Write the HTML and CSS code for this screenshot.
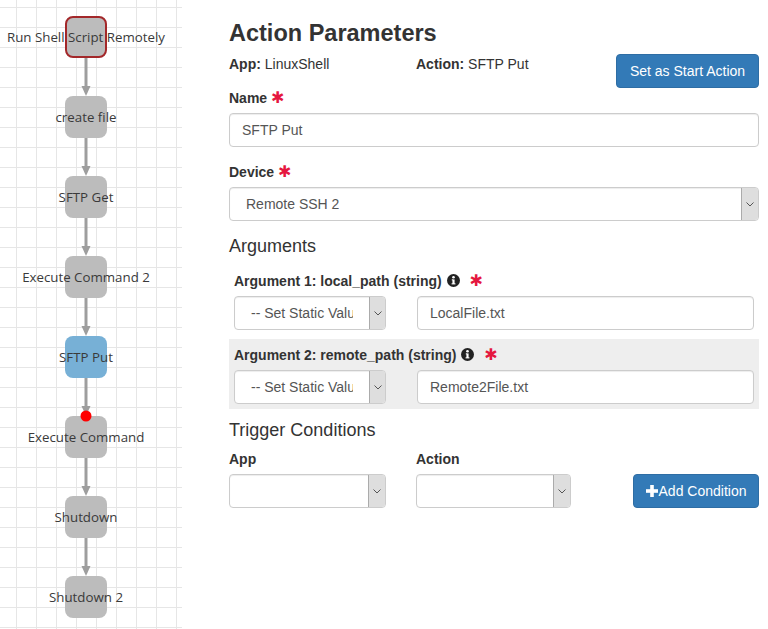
FILE: index.html
```html
<!DOCTYPE html>
<html>
<head>
<meta charset="utf-8">
<link rel="stylesheet" href="styles.css">
</head>
<body>
<div class="page">
  <div class="canvas">
    <svg class="graph" width="182" height="629" viewBox="0 0 182 629">
      <defs>
        <g id="edge">
          <line x1="86" y1="0" x2="86" y2="30" stroke="#9e9e9e" stroke-width="3"/>
          <polygon points="81.5,28 90.5,28 86,38" fill="#9e9e9e"/>
        </g>
      </defs>
      <use href="#edge" x="0" y="58"/>
      <use href="#edge" x="0" y="138"/>
      <use href="#edge" x="0" y="218"/>
      <use href="#edge" x="0" y="298"/>
      <use href="#edge" x="0" y="378"/>
      <use href="#edge" x="0" y="458"/>
      <use href="#edge" x="0" y="538"/>

      <rect class="node start" x="66" y="17" width="40" height="40" rx="7"/>
      <rect class="node" x="65" y="96" width="42" height="42" rx="8"/>
      <rect class="node" x="65" y="176" width="42" height="42" rx="8"/>
      <rect class="node" x="65" y="256" width="42" height="42" rx="8"/>
      <rect class="node selected" x="65" y="336" width="42" height="42" rx="8"/>
      <rect class="node" x="65" y="416" width="42" height="42" rx="8"/>
      <rect class="node" x="65" y="496" width="42" height="42" rx="8"/>
      <rect class="node" x="65" y="576" width="42" height="42" rx="8"/>

      <circle cx="86" cy="416" r="5.5" fill="#ff0000"/>

      <text class="lbl" x="86" y="42">Run Shell Script Remotely</text>
      <text class="lbl" x="86" y="122">create file</text>
      <text class="lbl" x="86" y="202">SFTP Get</text>
      <text class="lbl" x="86" y="282">Execute Command 2</text>
      <text class="lbl" x="86" y="362">SFTP Put</text>
      <text class="lbl" x="86" y="442">Execute Command</text>
      <text class="lbl" x="86" y="522">Shutdown</text>
      <text class="lbl" x="86" y="602">Shutdown 2</text>
    </svg>
  </div>

  <div class="panel">
    <h3 class="title">Action Parameters</h3>
    <div class="meta-row">
      <div class="meta meta-app"><b>App:</b> LinuxShell</div>
      <div class="meta meta-action"><b>Action:</b> SFTP Put</div>
      <button class="btn btn-primary btn-start">Set as Start Action</button>
    </div>

    <div class="form-group">
      <label class="lbl-bold">Name <span class="req">✱</span></label>
      <input class="form-control" type="text" value="SFTP Put">
    </div>

    <div class="form-group">
      <label class="lbl-bold">Device <span class="req">✱</span></label>
      <div class="select">
        <span class="select-text">Remote SSH 2</span>
        <span class="select-arrow"><svg width="8" height="5" viewBox="0 0 8 5"><polyline points="0.5,0.5 4,4 7.5,0.5" fill="none" stroke="#555" stroke-width="1"/></svg></span>
      </div>
    </div>

    <h4 class="section">Arguments</h4>

    <div class="arg">
      <label class="lbl-bold">Argument 1: local_path (string) <svg class="info" width="13" height="13" viewBox="0 0 12 12"><circle cx="6" cy="6" r="6" fill="#222"/><circle cx="6" cy="3" r="1.2" fill="#fff"/><rect x="5" y="5" width="2" height="4.2" fill="#fff"/><rect x="4.2" y="8.6" width="3.6" height="1" fill="#fff"/><rect x="4.4" y="5" width="1.2" height="0.9" fill="#fff"/></svg> <span class="req req-gap">✱</span></label>
      <div class="arg-row">
        <div class="select select-sm">
          <span class="select-text">-- Set Static Value --</span>
          <span class="select-arrow"><svg width="8" height="5" viewBox="0 0 8 5"><polyline points="0.5,0.5 4,4 7.5,0.5" fill="none" stroke="#555" stroke-width="1"/></svg></span>
        </div>
        <input class="form-control" type="text" value="LocalFile.txt">
      </div>
    </div>

    <div class="arg arg-alt">
      <label class="lbl-bold">Argument 2: remote_path (string) <svg class="info" width="13" height="13" viewBox="0 0 12 12"><circle cx="6" cy="6" r="6" fill="#222"/><circle cx="6" cy="3" r="1.2" fill="#fff"/><rect x="5" y="5" width="2" height="4.2" fill="#fff"/><rect x="4.2" y="8.6" width="3.6" height="1" fill="#fff"/><rect x="4.4" y="5" width="1.2" height="0.9" fill="#fff"/></svg> <span class="req req-gap">✱</span></label>
      <div class="arg-row">
        <div class="select select-sm">
          <span class="select-text">-- Set Static Value --</span>
          <span class="select-arrow"><svg width="8" height="5" viewBox="0 0 8 5"><polyline points="0.5,0.5 4,4 7.5,0.5" fill="none" stroke="#555" stroke-width="1"/></svg></span>
        </div>
        <input class="form-control" type="text" value="Remote2File.txt">
      </div>
    </div>

    <h4 class="section section-trigger">Trigger Conditions</h4>
    <div class="trigger-row">
      <div class="trig-col trig-app">
        <label class="lbl-bold">App</label>
        <div class="select">
          <span class="select-text"></span>
          <span class="select-arrow"><svg width="8" height="5" viewBox="0 0 8 5"><polyline points="0.5,0.5 4,4 7.5,0.5" fill="none" stroke="#555" stroke-width="1"/></svg></span>
        </div>
      </div>
      <div class="trig-col trig-action">
        <label class="lbl-bold">Action</label>
        <div class="select">
          <span class="select-text"></span>
          <span class="select-arrow"><svg width="8" height="5" viewBox="0 0 8 5"><polyline points="0.5,0.5 4,4 7.5,0.5" fill="none" stroke="#555" stroke-width="1"/></svg></span>
        </div>
      </div>
      <button class="btn btn-primary btn-add"><svg class="plus" width="12" height="12" viewBox="0 0 12 12"><rect x="4.2" y="0" width="3.6" height="12" fill="#fff"/><rect x="0" y="4.2" width="12" height="3.6" fill="#fff"/></svg>Add Condition</button>
    </div>
  </div>
</div>
</body>
</html>
```
FILE: styles.css
```css
* { box-sizing: border-box; }
html, body { margin: 0; padding: 0; background: #fff; }
body {
  font-family: "Liberation Sans", Arial, sans-serif;
  font-size: 14px;
  line-height: 20px;
  color: #333;
}
.page {
  display: flex;
  align-items: flex-start;
  width: 768px;
  height: 629px;
  overflow: hidden;
}
.canvas {
  width: 182px;
  height: 629px;
  flex: 0 0 182px;
  background-color: #fff;
  background-image:
    linear-gradient(to right, #e6e6e6 1px, transparent 1px),
    linear-gradient(to bottom, #e6e6e6 1px, transparent 1px);
  background-size: 20px 20px;
  background-position: 16px 7px;
}
.graph { display: block; }
.node { fill: #bcbcbc; }
.node.start { stroke: #a3282a; stroke-width: 2; }
.node.selected { fill: #77b0d6; }
.lbl {
  font-family: "Open Sans", "Noto Sans", sans-serif;
  font-size: 13.3px;
  fill: #3a3a3a;
  text-anchor: middle;
}

.panel {
  margin-left: 47px;
  width: 530px;
  flex: 0 0 530px;
}
.title {
  margin: 20px 0 8px;
  font-size: 23.5px;
  line-height: 26px;
  font-weight: bold;
  color: #333;
}
.meta-row {
  display: flex;
  align-items: flex-start;
  height: 34px;
}
.meta { line-height: 20px; }
.meta-app { width: 187px; }
.meta-action { flex: 1; }
.btn {
  font-family: "Liberation Sans", Arial, sans-serif;
  font-size: 14px;
  line-height: 20px;
  border-radius: 4px;
  padding: 6px 12px;
  height: 34px;
  cursor: pointer;
}
.btn-primary {
  background: #337ab7;
  border: 1px solid #2e6da4;
  color: #fff;
}
.btn-start { width: 143px; }

.form-group { margin-bottom: 15px; }
.lbl-bold {
  display: block;
  font-weight: bold;
  margin-bottom: 5px;
  line-height: 20px;
}
.req {
  color: #e5173f;
  font-family: "DejaVu Sans", sans-serif;
  font-size: 16px;
  font-weight: bold;
  line-height: 20px;
}
.req-gap { margin-left: 6px; }
.info { vertical-align: -1px; margin-left: 1px; }

.form-control {
  display: block;
  width: 100%;
  height: 34px;
  padding: 6px 12px;
  font-family: "Liberation Sans", Arial, sans-serif;
  font-size: 14px;
  line-height: 20px;
  color: #555;
  background: #fff;
  border: 1px solid #ccc;
  border-radius: 4px;
  box-shadow: inset 0 1px 1px rgba(0,0,0,.075);
  outline: none;
}
.select {
  display: flex;
  align-items: stretch;
  height: 34px;
  border: 1px solid #ccc;
  border-radius: 4px;
  background: #fff;
  box-shadow: inset 0 1px 1px rgba(0,0,0,.075);
  overflow: hidden;
}
.select-text {
  flex: 1;
  min-width: 0;
  padding-left: 16px;
  line-height: 32px;
  color: #555;
  white-space: nowrap;
  overflow: hidden;
}
.select-sm .select-text { margin-right: 16px; }
.select-arrow {
  flex: 0 0 17px;
  background: #dedede;
  border-left: 1px solid #ababab;
  display: flex;
  align-items: center;
  justify-content: center;
}
.select-sm .select-arrow { flex-basis: 16px; }

.section {
  margin: 1px 0 9px;
  font-size: 18px;
  font-weight: normal;
  line-height: 20px;
  color: #333;
}
.arg {
  padding: 6px 5px 5px;
  margin-bottom: 4px;
}
.arg-alt { background: #eee; }
.arg-row {
  display: grid;
  grid-template-columns: 152px 1fr;
  column-gap: 31px;
}
.section-trigger { margin: 11px 0 9px; }
.trigger-row {
  display: flex;
  align-items: flex-end;
}
.trig-app { width: 157px; margin-right: 30px; }
.trig-action { width: 155px; margin-right: 62px; }
.btn-add {
  width: 126px;
  padding: 6px 0;
  display: flex;
  align-items: center;
  justify-content: center;
}
.plus { margin-right: 1px; }
```
